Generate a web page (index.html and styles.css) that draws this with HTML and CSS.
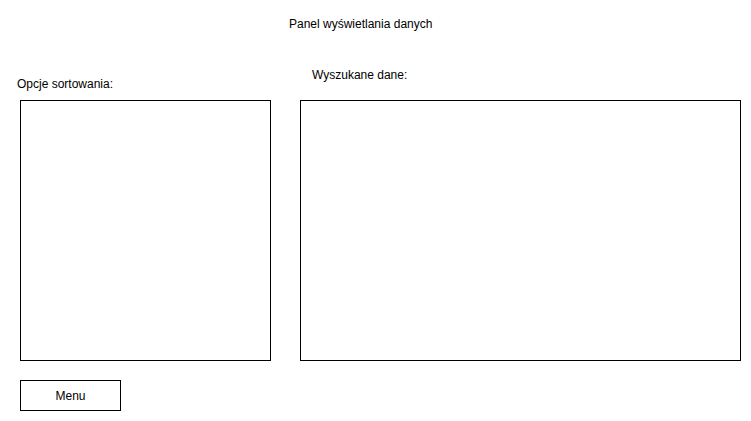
FILE: index.html
```html
<!DOCTYPE html>
<html lang="pl">
<head>
  <meta charset="UTF-8">
  <title>Panel wyświetlania danych</title>
  <link rel="stylesheet" href="styles.css">
</head>
<body>
  <div id="panel">
    <div class="tytul">Panel wyświetlania danych</div>

    <div class="kolumny">
      <div class="kolumna lewa">
        <div class="etykieta">Opcje sortowania:</div>
        <div class="ramka ramka-sort"></div>
      </div>
      <div class="kolumna prawa">
        <div class="etykieta">Wyszukane dane:</div>
        <div class="ramka ramka-dane"></div>
      </div>
    </div>

    <div class="przycisk">Menu</div>
  </div>
</body>
</html>
```

FILE: styles.css
```css
html, body {
  margin: 0;
  padding: 0;
  width: 100%;
  height: 100%;
  background-color: #fff;
  font-family: "Liberation Sans", Arial, sans-serif;
  font-size: 12px;
  color: #000;
}
#panel {
  padding: 17px 0 0 20px;
}
.tytul {
  margin-left: 269px;
  line-height: 14px;
  height: 14px;
}
.kolumny {
  display: flex;
  gap: 29px;
  margin-top: 29px;
}
.kolumna {
  display: flex;
  flex-direction: column;
}
.etykieta {
  line-height: 14px;
  height: 14px;
}
.lewa .etykieta {
  margin-left: -3px;
  margin-top: 17px;
  margin-bottom: 9px;
}
.prawa .etykieta {
  margin-left: 12px;
  margin-top: 8px;
  margin-bottom: 18px;
}
.ramka {
  border: 1px solid #000;
  height: 259px;
}
.ramka-sort {
  width: 249px;
}
.ramka-dane {
  width: 439px;
}
.przycisk {
  margin-top: 19px;
  width: 99px;
  height: 29px;
  border: 1px solid #000;
  display: flex;
  justify-content: center;
  align-items: center;
  box-sizing: content-box;
}
```
